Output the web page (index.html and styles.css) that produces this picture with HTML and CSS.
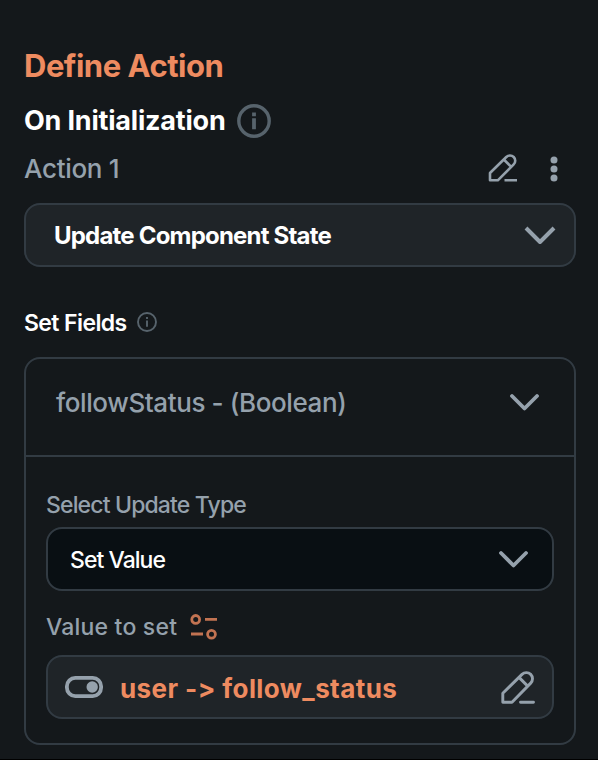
FILE: index.html
```html
<!DOCTYPE html>
<html lang="en">
<head>
  <meta charset="UTF-8" />
  <meta name="viewport" content="width=device-width, initial-scale=1" />
  <title>Define Action</title>
  <link rel="stylesheet" href="styles.css">
</head>
<body>
  <div class="panel">
    <h1>Define Action</h1>
    <div class="trigger">
      <h2>On Initialization</h2>
      <svg class="info" width="34" height="34" viewBox="0 0 34 34">
        <circle cx="17" cy="17" r="15.2" stroke-width="3.4" />
        <path d="M17 14.2v11M17 8.6v3.6" stroke-width="3.8" />
      </svg>
    </div>

    <!-- Action row -->
    <div class="action">
      <span class="action-name">Action 1</span>
      <svg class="icon" width="30" height="28" viewBox="0 0 30 28">
        <path d="M2 26.3V19L18.3 3a5.2 5.2 0 0 1 7.4 7.4L9.8 26.3zM15.8 5.5l7.4 7.4M16.5 26.3h12.5" stroke-width="2.6" />
      </svg>
      <svg class="dots" width="8" height="28" viewBox="0 0 8 28">
        <circle cx="4" cy="6" r="3.5" />
        <circle cx="4" cy="15" r="3.5" />
        <circle cx="4" cy="24" r="3.5" />
      </svg>
    </div>

    <div class="select select-action">
      <span>Update Component State</span>
      <svg class="icon" width="32" height="20" viewBox="0 0 32 20">
        <path d="M2 3l14 14L30 3" stroke-width="4" />
      </svg>
    </div>

    <div class="fields-title">
      <h3>Set Fields</h3>
      <svg class="info" width="20" height="20" viewBox="0 0 20 20">
        <circle cx="10" cy="10" r="9" stroke-width="1.9" />
        <path d="M10 8.5v6.2M10 5v2" stroke-width="1.9" />
      </svg>
    </div>

    <!-- Field card -->
    <section class="card">
      <div class="card-head">
        <span>followStatus - (Boolean)</span>
        <svg class="icon" width="29" height="18" viewBox="0 0 29 18">
          <path d="M2 3l12.5 12.5L27 3" stroke-width="3.8" stroke-linecap="round" />
        </svg>
      </div>
      <div class="card-body">
        <div class="label label-type">Select Update Type</div>
        <div class="select select-type">
          <span>Set Value</span>
          <svg class="icon" width="29" height="18" viewBox="0 0 29 18">
            <path d="M2 3l12.5 12.5L27 3" stroke-width="3.8" stroke-linecap="round" />
          </svg>
        </div>
        <div class="label label-value">
          <span>Value to set</span>
          <svg class="variable" width="28" height="26" viewBox="0 0 28 26">
            <circle cx="5.7" cy="5.4" r="3.9" />
            <circle cx="21.5" cy="20.3" r="3.9" />
            <path d="M15 5.4h12M1 20h12" />
          </svg>
        </div>
        <div class="select select-value">
          <svg class="toggle" width="38" height="22" viewBox="0 0 38 22">
            <rect x="1.9" y="1.9" width="34.2" height="18.2" rx="8.4" />
            <circle cx="27.2" cy="11" r="5.7" />
          </svg>
          <span>user -&gt; follow_status</span>
          <svg class="icon" width="35" height="34" viewBox="0 0 35 34">
            <path d="M2.8 32.2V23.2L22 4.4a6.1 6.1 0 0 1 8.7 8.7L12 32.2zM19 7.4l8.7 8.7M20.5 32.2h13" stroke-width="2.9" stroke-linecap="round" />
          </svg>
        </div>
      </div>
    </section>
  </div>
</body>
</html>
```
FILE: styles.css
```css
* { box-sizing: border-box; }
html, body { height: 100%; margin: 0; padding: 0; }
body {
  font-family: Inter, sans-serif;
  background: #14181b;
  color: #fff;
}
h1, h2, h3 { margin: 0; white-space: nowrap; }
span { white-space: nowrap; }
svg { display: block; flex: none; fill: none; }
.panel {
  height: 760px;
  padding: 48px 22px 0 24px;
  border-bottom: 1px solid #000;
}
.icon { stroke: #95a1ac; stroke-linejoin: round; }
.info { stroke: #57636c; }
h1 {
  font-size: 31px;
  font-weight: 700;
  line-height: 36px;
  letter-spacing: -0.5px;
  color: #ee8b60;
}
.trigger {
  display: flex;
  align-items: center;
  gap: 11px;
  height: 34px;
  margin-top: 20px;
}
h2 { font-size: 27px; font-weight: 700; line-height: 32px; letter-spacing: -0.2px; padding-bottom: 1px; }
/* Action row */
.action {
  display: flex;
  align-items: center;
  height: 34px;
  margin-top: 13px;
  padding-right: 18px;
  font-size: 26px;
  font-weight: 450;
  color: #95a1ac;
}
.action-name { flex: 1; letter-spacing: -0.3px; }
.dots { margin-left: 32px; fill: #95a1ac; }
/* Boxes */
.select {
  display: flex;
  align-items: center;
  justify-content: space-between;
  height: 64px;
  border: 2px solid #323b43;
  border-radius: 16px;
  background: #1f2428;
}
.select-action {
  margin-top: 18px;
  padding: 0 18px 0 28px;
  font-size: 24px;
  font-weight: 650;
  letter-spacing: -0.8px;
}
.fields-title {
  display: flex;
  align-items: center;
  gap: 10px;
  height: 34px;
  margin-top: 38px;
}
h3 { padding-top: 2px; font-size: 23px; font-weight: 600; letter-spacing: -0.6px; }
/* Field card */
.card {
  height: 388px;
  margin-top: 18px;
  border: 2px solid #323b43;
  border-radius: 16px;
}
.card-head {
  display: flex;
  align-items: center;
  justify-content: space-between;
  height: 98px;
  padding: 0 35px 10px 30px;
  border-bottom: 2px solid #323b43;
  font-size: 26px;
  font-weight: 450;
  letter-spacing: -0.4px;
  color: #95a1ac;
}
.card-body { padding: 33px 20px 0; }
.label {
  display: flex;
  align-items: center;
  height: 30px;
  font-size: 23px;
  font-weight: 450;
  color: #95a1ac;
}
.label-type { letter-spacing: -0.85px; }
.select-type {
  margin-top: 7px;
  padding: 0 24px 0 22px;
  background: #090f13;
  font-size: 23px;
  font-weight: 550;
  letter-spacing: -0.95px;
}
.select-type span { padding-top: 2px; }
.label-value { gap: 13px; margin-top: 21px; letter-spacing: 0.2px; }
.variable { stroke: #c27352; stroke-width: 2.8; }
.select-value {
  gap: 17px;
  margin-top: 13px;
  padding: 0 17px 0 17px;
  font-size: 26px;
  font-weight: 700;
  letter-spacing: 0.42px;
  color: #ee8b60;
}
/* keep "->" as two characters */
.select-value span { flex: 1; font-feature-settings: "calt" 0; padding-top: 2px; }
.toggle rect { stroke: #95a1ac; stroke-width: 3.8; }
.toggle circle { fill: #95a1ac; }
```
